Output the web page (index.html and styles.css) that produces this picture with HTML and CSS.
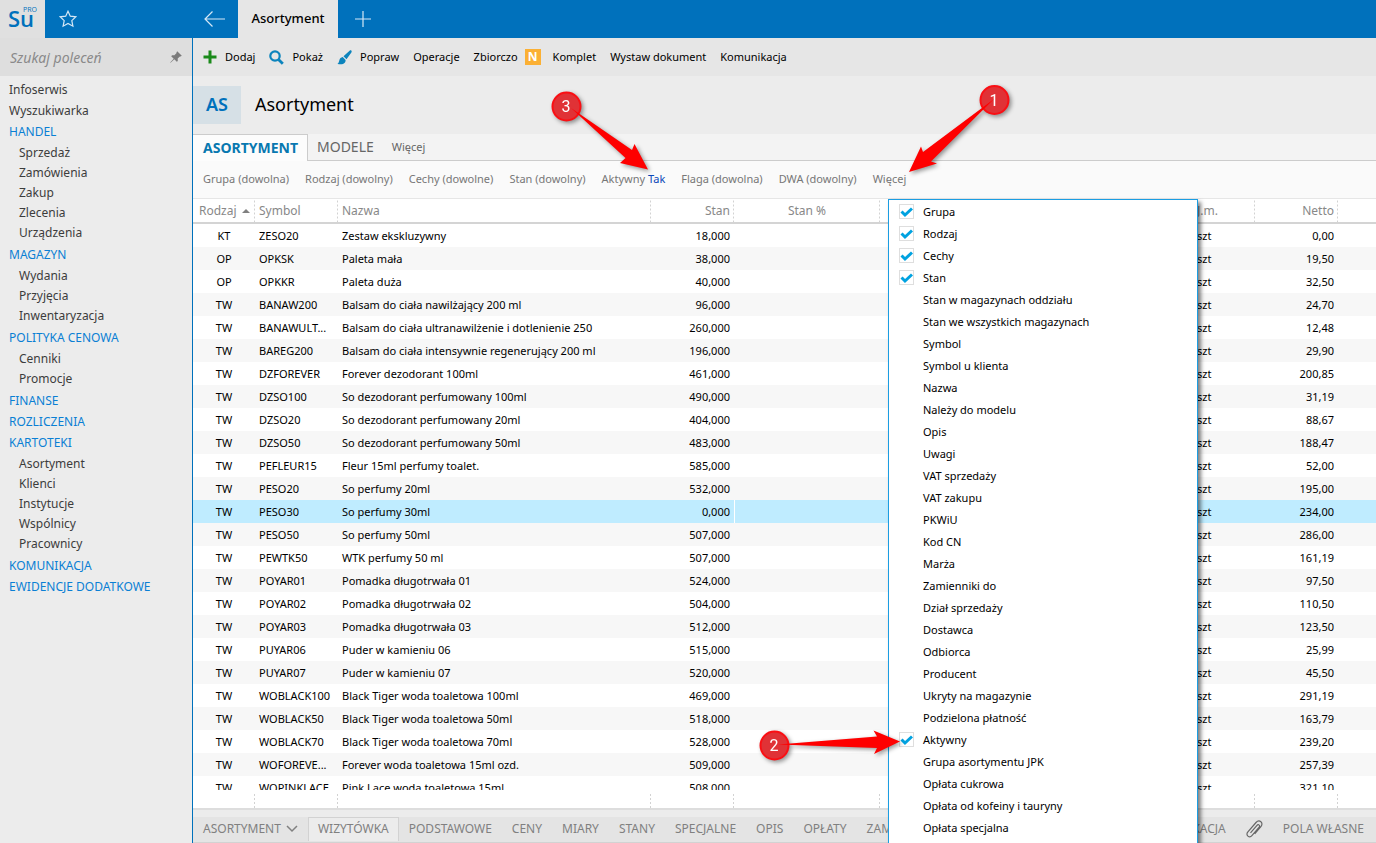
FILE: index.html
```html
<!DOCTYPE html>
<html lang="pl">
<head>
<meta charset="utf-8">
<title>Asortyment</title>
<link rel="stylesheet" href="styles.css">
</head>
<body>
<header class="topbar">
  <div class="logo"><span class="logo-su">Su</span><span class="logo-pro">PRO</span></div>
  <button class="icon-btn star" aria-label="Ulubione"><svg width="18" height="18" viewBox="0 0 18 18"><path d="M9 1.200l2.300 5 5.600.600-4.100 3.800 1.100 5.600L9 13.400l-4.900 2.800 1.100-5.600L1.100 6.800l5.600-.6z"/></svg></button>
  <button class="icon-btn back" aria-label="Wstecz"><svg width="22" height="18" viewBox="0 0 22 18"><path d="M21 9H1M8.500 1.500L1 9l7.500 7.500"/></svg></button>
  <a class="doc-tab" href="#">Asortyment</a>
  <button class="icon-btn add" aria-label="Nowa karta"><svg width="16" height="16" viewBox="0 0 16 16"><path d="M8 0v16M0 8h16"/></svg></button>
</header>
<div class="shell">
  <aside class="sidebar">
    <div class="search">
      <input type="text" placeholder="Szukaj poleceń" aria-label="Szukaj poleceń">
      <svg width="12" height="12" viewBox="0 0 12 12"><path fill="#7b7b7b" d="M7.200.2l4.600 4.600-1.200.8-.7-.2-2.200 2.200.1 2.300-1 .9L4.300 8.300.6 11.800l-.4-.4L3.700 7.700 1.200 5.200l.9-1 2.300.1 2.200-2.200-.2-.7z"/></svg>
    </div>
    <nav class="menu" aria-label="Moduły">
      <a href="#">Infoserwis</a>
      <a href="#">Wyszukiwarka</a>
      <a class="group" href="#">HANDEL</a>
      <ul><li><a href="#">Sprzedaż</a></li><li><a href="#">Zamówienia</a></li><li><a href="#">Zakup</a></li><li><a href="#">Zlecenia</a></li><li><a href="#">Urządzenia</a></li></ul>
      <a class="group" href="#">MAGAZYN</a>
      <ul><li><a href="#">Wydania</a></li><li><a href="#">Przyjęcia</a></li><li><a href="#">Inwentaryzacja</a></li></ul>
      <a class="group" href="#">POLITYKA CENOWA</a>
      <ul><li><a href="#">Cenniki</a></li><li><a href="#">Promocje</a></li></ul>
      <a class="group" href="#">FINANSE</a>
      <a class="group" href="#">ROZLICZENIA</a>
      <a class="group" href="#">KARTOTEKI</a>
      <ul><li><a href="#">Asortyment</a></li><li><a href="#">Klienci</a></li><li><a href="#">Instytucje</a></li><li><a href="#">Wspólnicy</a></li><li><a href="#">Pracownicy</a></li></ul>
      <a class="group" href="#">KOMUNIKACJA</a>
      <a class="group" href="#">EWIDENCJE DODATKOWE</a>
    </nav>
  </aside>
  <main class="content">
    <div class="toolbar">
      <button><svg width="14" height="14" viewBox="0 0 14 14"><path d="M7 .5v13M.5 7h13" stroke="#1a8a1a" stroke-width="3" fill="none"/></svg>Dodaj</button>
      <button><svg width="15" height="15" viewBox="0 0 15 15"><circle cx="6" cy="6" r="4.700" fill="none" stroke="#0c84bd" stroke-width="2.200"/><path d="M9.500 9.500l4.300 4.300" stroke="#0c84bd" stroke-width="2.800"/></svg>Pokaż</button>
      <button><svg width="15" height="15" viewBox="0 0 15 15"><path fill="#0c84bd" d="M14.300.6c.6.600.5 1.200.1 1.800L9.500 9.200 6.500 6.300 12.600.700c.6-.5 1.200-.6 1.700-.1zM5.700 7.100l2.900 2.800c.2 1.800-.9 3.300-2.600 4-1.800.7-4.100.6-5.600-.2 1.300-.6 1.500-1.600 1.900-3.200.5-1.900 1.700-3.100 3.400-3.400z"/></svg>Popraw</button>
      <button>Operacje</button>
      <button>Zbiorczo</button>
      <button><span class="badge-n">N</span>Komplet</button>
      <button>Wystaw dokument</button>
      <button>Komunikacja</button>
    </div>
    <div class="title"><span class="code">AS</span><h1>Asortyment</h1></div>
    <nav class="tabs" aria-label="Widoki">
      <a class="active" href="#">ASORTYMENT</a><a href="#">MODELE</a><a class="more" href="#">Więcej</a>
    </nav>
    <div class="filters">
      <button>Grupa (dowolna)</button><button>Rodzaj (dowolny)</button><button>Cechy (dowolne)</button><button>Stan (dowolny)</button><button>Aktywny <b>Tak</b></button><button>Flaga (dowolna)</button><button>DWA (dowolny)</button><button>Więcej</button>
    </div>
    <div class="stage">
      <div class="grid">
        <table>
          <colgroup><col class="c-kind"><col class="c-symbol"><col class="c-name"><col class="c-stock"><col class="c-percent"><col><col class="c-unit"><col class="c-net"><col class="c-rest"></colgroup>
          <thead><tr><th>Rodzaj<svg class="sort" width="8" height="4" viewBox="0 0 8 4"><path fill="#808080" d="M4 0l4 4H0z"/></svg></th><th>Symbol</th><th>Nazwa</th><th class="num">Stan</th><th class="mid">Stan %</th><th></th><th>J.m.</th><th class="num">Netto</th><th></th></tr></thead>
          <tbody id="rows"></tbody>
        </table>
      </div>
      <div class="summary"><i class="s-kind"></i><i class="s-symbol"></i><i class="s-name"></i><i class="s-stock"></i><i class="s-percent"></i><i class="s-fill"></i><i class="s-unit"></i><i class="s-net"></i><i class="s-rest"></i></div>
      <div class="details">
        <button class="picker">ASORTYMENT<svg width="12" height="8" viewBox="0 0 12 8"><path d="M1 1l5 5 5-5" fill="none" stroke="#808080" stroke-width="1.500"/></svg></button>
        <button class="active">WIZYTÓWKA</button><button>PODSTAWOWE</button><button>CENY</button><button>MIARY</button><button>STANY</button><button>SPECJALNE</button><button>OPIS</button><button>OPŁATY</button><button>ZAMIENNIKI</button>
        <button class="tail">KOMUNIKACJA</button>
        <button class="clip" aria-label="Załączniki"><svg width="17" height="18" viewBox="0 0 17 18"><path d="M4.500 12.800L11 5.300c.6-.7 1.600-.8 2.200-.2.600.500.6 1.400 0 2.100L5.900 15.700c-1 1.200-2.800 1.400-4 .4s-1.200-2.700-.2-3.900L10 2.500c1.400-1.600 3.500-2 4.900-.8 1.400 1.200 1.400 3.300 0 4.900l-6.200 7.200" fill="none" stroke="#666" stroke-width="1.200"/></svg></button>
        <button>POLA WŁASNE</button>
      </div>
      <div class="popup" id="popup"></div>
    </div>
  </main>
</div>
<svg class="note note-1" width="120" height="100" viewBox="900 76 120 100" role="img" aria-label="1"><circle class="disc" cx="994.500" cy="100" r="14"/><text x="994" y="106">1</text><path d="M994 99L923 152l-2-5.500L909 172l28-8.500-6-2z"/></svg>
<svg class="note note-2" width="156" height="50" viewBox="752 720 156 50" role="img" aria-label="2"><circle class="disc" cx="774.500" cy="745.500" r="14"/><text x="774" y="751">2</text><path d="M778 744.500L877 736.500l-3.500-6L900 741.500 874 754l3-6z"/></svg>
<svg class="note note-3" width="116" height="100" viewBox="544 84 116 100" role="img" aria-label="3"><circle class="disc" cx="566.500" cy="106.500" r="14"/><text x="566" y="112">3</text><path d="M571 108L632 150l2.500-6L648 169.500 620 163l5.500-5z"/></svg>
<script src="app.js"></script>
</body>
</html>
```
FILE: styles.css
```css
* { box-sizing: border-box; }
body {
  margin: 0; height: 100vh; overflow: hidden;
  display: flex; flex-direction: column;
  font: 12px/20px "Noto Sans", "Open Sans", sans-serif; color: #000; background: #ececec;
}
button { font: inherit; color: inherit; background: none; border: 0; padding: 0; white-space: nowrap; }
a { color: inherit; text-decoration: none; }
.topbar { flex: none; height: 38px; display: flex; background: #0071bc; }
.logo { width: 45px; background: #e0e0e0; color: #0071bc; display: flex; padding-left: 8px; }
.logo-su { font: 600 22px/37px "Open Sans", sans-serif; }
.logo-pro { font: 7px/8px "Open Sans", sans-serif; margin: 6px 0 0 -11px; }
.icon-btn { display: flex; align-items: center; justify-content: center; }
.icon-btn svg { fill: none; stroke: #d5e8f6; stroke-width: 1.200; }
.star { width: 46px; }
.back { width: 46px; margin-left: 101px; }
.doc-tab { width: 100px; background: #e6e6e6; text-align: center; font-size: 13px; line-height: 37px; font-weight: 500; }
.add { width: 50px; }
.shell { flex: 1; min-height: 0; display: flex; }
.sidebar { flex: none; width: 192px; background: #ececec; color: #3c3c3c; }
.search { height: 38px; background: #dedede; display: flex; align-items: center; padding: 0 10px; }
.search input { flex: 1; min-width: 0; border: 0; padding: 0; background: none; font: italic 14px "Noto Sans", sans-serif; }
.search input::placeholder { color: #8a8a8a; opacity: 1; }
.menu { padding-top: 3px; }
.menu > a { display: block; line-height: 21px; padding-left: 9px; }
.menu .group { color: #0a7fd4; }
.menu ul { list-style: none; margin: 0; padding: 1px 0 1px 19px; }
.menu li a { display: block; }
.content { flex: 1; min-width: 0; border-left: 1px solid #0071bc; display: flex; flex-direction: column; }
.toolbar { flex: none; height: 38px; background: #e6e6e6; display: flex; align-items: center; gap: 14px; padding-left: 10px; font-size: 11px; }
.toolbar button { display: flex; align-items: center; gap: 8px; }
.badge-n { width: 16px; height: 16px; background: #fbb034; color: #fff; font: bold 12px/16px "Noto Sans", sans-serif; margin-left: -7px; margin-right: 4px; text-align: center; }
.title { flex: none; height: 58px; display: flex; align-items: center; gap: 14px; }
.code { width: 48px; height: 38px; background: #d6e0e6; color: #0071bc; font: 600 18px/36px "Noto Sans", sans-serif; text-align: center; }
h1 { margin: 0; padding-bottom: 2px; font-size: 18px; font-weight: 400; }
.tabs { flex: none; height: 27px; display: flex; background: #f3f3f3; border-bottom: 1px solid #ccc; color: #666; font-size: 14px; line-height: 26px; }
.tabs a { padding: 0 9px; }
.tabs .active { background: #fcfcfc; border: 1px solid #ccc; border-width: 1px 1px 0 0; height: 27px; padding-left: 10px; color: #0878b0; font-weight: 700; }
.tabs .more { font-size: 11px; }
.filters { flex: none; height: 38px; display: flex; align-items: center; gap: 16px; padding: 0 0 2px 10px; background: #fafafa; border-bottom: 1px solid #e6e6e6; color: #777; font-size: 11px; }
.filters b { font-weight: 400; color: #0a47b8; }
.stage { flex: 1; min-height: 0; display: flex; flex-direction: column; position: relative; }
.grid { flex: 1; min-height: 0; overflow: hidden; background: #fff; }
table { width: 100%; table-layout: fixed; border-collapse: separate; border-spacing: 0; }
.c-kind, .s-kind { width: 62px; }
.c-symbol, .s-symbol { width: 83px; }
.c-name, .s-name { width: 313px; }
.c-stock, .s-stock { width: 83px; }
.c-percent, .s-percent { width: 146px; }
.c-unit, .s-unit { width: 62px; }
.c-net, .s-net { width: 83px; }
.c-rest, .s-rest { width: 38px; }
th, td { padding: 0 4px; overflow: hidden; white-space: nowrap; text-align: left; }
th { height: 25px; font-weight: 400; color: #888; border-bottom: 2px solid #d4d4d4; background: linear-gradient(#d2d2d2 50%, transparent 0) right / 1px 4px repeat-y; }
th:first-child { padding: 0 0 0 6px; }
th:last-child { background: none; }
.sort { margin: 0 0 2px 5px; }
td { height: 23px; font-size: 11px; padding-top: 1px; }
td:first-child, .mid { text-align: center; }
.num { text-align: right; }
tbody tr:nth-child(even) { background: #f7f7f7; }
tbody tr.selected { background: #bfecff; }
tbody tr.selected td:nth-child(5) { border-left: 1px solid #fff; }
.summary { flex: none; height: 20px; display: flex; background: #fff; border-bottom: 2px solid #ddd; padding-top: 2px; }
.summary i { background: linear-gradient(#d2d2d2 50%, transparent 0) right / 1px 4px repeat-y; }
.summary .s-fill { flex: 1; }
.summary .s-rest { background: none; }
.details { flex: none; height: 33px; padding: 7px 2px 1px 0; display: flex; background: linear-gradient(#ececec 7px, #e4e4e4 0); border-bottom: 1px solid #d2d2d2; color: #808080; }
.details button { padding: 0 9px 2px; border: 1px solid transparent; border-bottom: 0; }
.details .active { background: #ececec; border-color: #d2d2d2; }
.details .picker { display: flex; align-items: center; gap: 5px; }
.details .tail { margin-left: auto; }
.details .clip { display: flex; align-items: center; }
.popup { position: absolute; left: 695px; top: 0; bottom: -4px; width: 310px; overflow: hidden; background: #fff; border: 1px solid #1b9de2; box-shadow: 3px 3px 4px rgba(0, 0, 0, .5); padding: 1px 10px; font-size: 11px; }
.popup label { display: flex; align-items: center; gap: 9px; height: 22px; }
.popup input { appearance: none; margin: 0 0 1px; width: 15px; height: 15px; border: 1px solid transparent; }
.popup input:checked { border-color: #dedede; background: url("data:image/svg+xml,%3Csvg xmlns='http://www.w3.org/2000/svg' viewBox='0 0 13 13'%3E%3Cpath d='M1.500 6.500l3.500 3.500 7-6.500' fill='none' stroke='%2300a2e0' stroke-width='3'/%3E%3C/svg%3E") center / 13px no-repeat; }
.note { position: absolute; filter: drop-shadow(2px 2px 2px rgba(0, 0, 0, .4)); pointer-events: none; }
.note-1 { left: 900px; top: 76px; }
.note-2 { left: 752px; top: 720px; }
.note-3 { left: 544px; top: 84px; }
.note .disc { fill: #e03236; stroke: #fa0f14; stroke-width: 2; }
.note path { fill: #fe0000; }
.note text { fill: #fff; font: 16px Roboto, sans-serif; text-anchor: middle; }
```
FILE: app.js
```js
const rows = `KT|ZESO20|Zestaw ekskluzywny|18,000|0,00
OP|OPKSK|Paleta mała|38,000|19,50
OP|OPKKR|Paleta duża|40,000|32,50
TW|BANAW200|Balsam do ciała nawilżający 200 ml|96,000|24,70
TW|BANAWULT...|Balsam do ciała ultranawilżenie i dotlenienie 250|260,000|12,48
TW|BAREG200|Balsam do ciała intensywnie regenerujący 200 ml|196,000|29,90
TW|DZFOREVER|Forever dezodorant 100ml|461,000|200,85
TW|DZSO100|So dezodorant perfumowany 100ml|490,000|31,19
TW|DZSO20|So dezodorant perfumowany 20ml|404,000|88,67
TW|DZSO50|So dezodorant perfumowany 50ml|483,000|188,47
TW|PEFLEUR15|Fleur 15ml perfumy toalet.|585,000|52,00
TW|PESO20|So perfumy 20ml|532,000|195,00
TW|PESO30|So perfumy 30ml|0,000|234,00
TW|PESO50|So perfumy 50ml|507,000|286,00
TW|PEWTK50|WTK perfumy 50 ml|507,000|161,19
TW|POYAR01|Pomadka długotrwała 01|524,000|97,50
TW|POYAR02|Pomadka długotrwała 02|504,000|110,50
TW|POYAR03|Pomadka długotrwała 03|512,000|123,50
TW|PUYAR06|Puder w kamieniu 06|515,000|25,99
TW|PUYAR07|Puder w kamieniu 07|520,000|45,50
TW|WOBLACK100|Black Tiger woda toaletowa 100ml|469,000|291,19
TW|WOBLACK50|Black Tiger woda toaletowa 50ml|518,000|163,79
TW|WOBLACK70|Black Tiger woda toaletowa 70ml|528,000|239,20
TW|WOFOREVE...|Forever woda toaletowa 15ml ozd.|509,000|257,39
TW|WOPINKLACE|Pink Lace woda toaletowa 15ml|508,000|321,10`;
document.getElementById("rows").innerHTML = rows.split("\n").map(line => {
  const [kind, symbol, name, ...nums] = line.split("|");
  const cls = symbol === "PESO30" ? ' class="selected"' : "";
  return `<tr${cls}><td>${kind}</td><td>${symbol}</td><td>${name}</td><td class="num">${nums[0]}</td><td></td><td></td><td>szt</td><td class="num">${nums[1]}</td><td></td></tr>`;
}).join("");

const active = ["Grupa", "Rodzaj", "Cechy", "Stan", "Aktywny"];
const filters = ["Grupa", "Rodzaj", "Cechy", "Stan", "Stan w magazynach oddziału", "Stan we wszystkich magazynach", "Symbol", "Symbol u klienta", "Nazwa", "Należy do modelu", "Opis", "Uwagi", "VAT sprzedaży", "VAT zakupu", "PKWiU", "Kod CN", "Marża", "Zamienniki do", "Dział sprzedaży", "Dostawca", "Odbiorca", "Producent", "Ukryty na magazynie", "Podzielona płatność", "Aktywny", "Grupa asortymentu JPK", "Opłata cukrowa", "Opłata od kofeiny i tauryny", "Opłata specjalna"];
document.getElementById("popup").innerHTML = filters.map(name =>
  `<label><input type="checkbox"${active.includes(name) ? " checked" : ""}>${name}</label>`
).join("");
```
